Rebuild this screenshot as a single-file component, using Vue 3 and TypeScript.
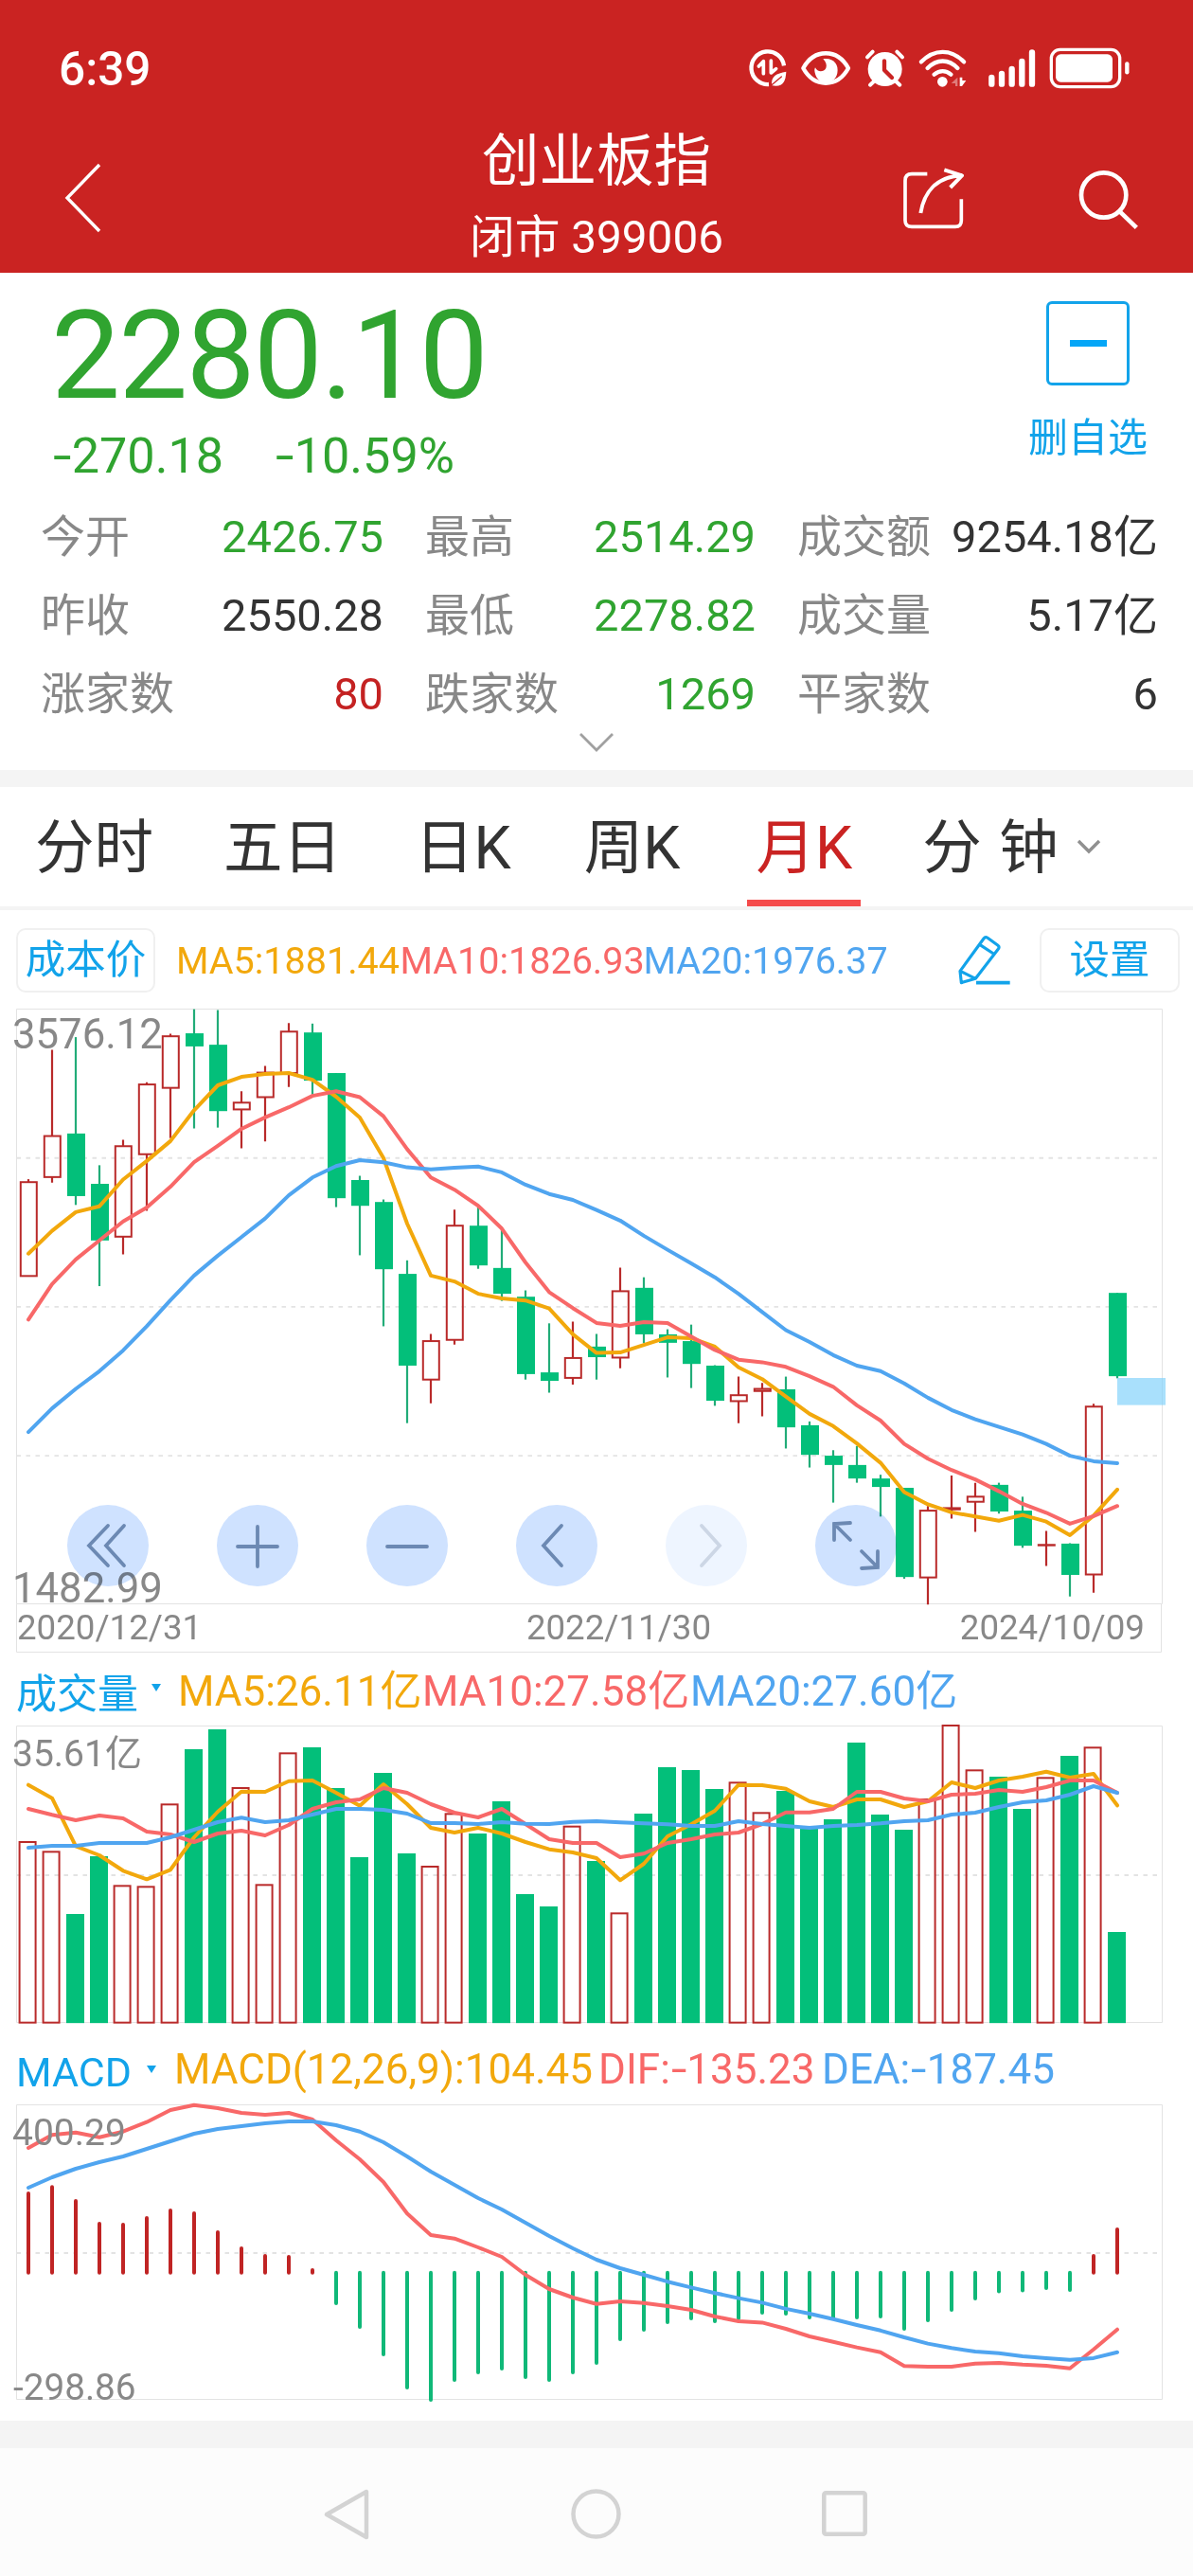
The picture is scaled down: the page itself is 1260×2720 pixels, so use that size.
<script setup lang="ts">
type Tone = 'up' | 'down' | 'flat'
interface Stat { label: string; value: string; tone: Tone }
interface Legend { text: string; color: string; width: number }
type Candle = [high: number, top: number, bottom: number, low: number, up: 0 | 1]

const RED = '#b92a2a'
const GREEN = '#03bf7a'
const ORANGE = '#f2a80c'
const PINK = '#f86868'
const BLUE = '#50a5f0'

const changes = ['-270.18', '-10.59%']
const stats: Stat[] = [
  { label: '今开', value: '2426.75', tone: 'down' },
  { label: '最高', value: '2514.29', tone: 'down' },
  { label: '成交额', value: '9254.18亿', tone: 'flat' },
  { label: '昨收', value: '2550.28', tone: 'flat' },
  { label: '最低', value: '2278.82', tone: 'down' },
  { label: '成交量', value: '5.17亿', tone: 'flat' },
  { label: '涨家数', value: '80', tone: 'up' },
  { label: '跌家数', value: '1269', tone: 'down' },
  { label: '平家数', value: '6', tone: 'flat' },
]

const priceLegend: Legend[] = [
  { text: 'MA5:1881.44', color: ORANGE, width: 236.5 },
  { text: 'MA10:1826.93', color: PINK, width: 257 },
  { text: 'MA20:1976.37', color: BLUE, width: 257 },
]
const volumeLegend: Legend[] = [
  { text: 'MA5:26.11亿', color: ORANGE, width: 258 },
  { text: 'MA10:27.58亿', color: PINK, width: 283 },
  { text: 'MA20:27.60亿', color: BLUE, width: 283 },
]
const macdLegend: Legend[] = [
  { text: 'MACD(12,26,9):104.45', color: ORANGE, width: 448 },
  { text: 'DIF:-135.23', color: PINK, width: 236 },
  { text: 'DEA:-187.45', color: BLUE, width: 250 },
]

// Keeps the minus sign as its own piece so that it can be drawn wider
const pieces = (text: string) => text.split(/(-)/).filter(Boolean)

// Horizontal position of month i
const cx = (i: number) => 30 + i * 25
const line = (values: number[], unit: number) =>
  values.map((v, i) => `${cx(i)},${(v / unit).toFixed(1)}`).join(' ')

// Price panel: 2.24 data units per pixel, measured downwards
const PRICE_UNIT = 2.24
const candles: Candle[] = [
  [437, 444, 666, 666, 1], [131, 335, 432, 445, 1], [101, 329, 477, 498, 0], [404, 448, 582, 690, 0],
  [344, 359, 573, 615, 1], [208, 213, 378, 512, 1], [93, 99, 221, 340, 1], [35, 92, 123, 317, 0],
  [37, 119, 276, 315, 0], [229, 256, 272, 364, 1], [169, 185, 243, 348, 1], [68, 88, 186, 219, 1],
  [69, 90, 204, 237, 0], [186, 186, 482, 503, 0], [429, 439, 500, 617, 0], [485, 491, 650, 785, 0],
  [629, 661, 878, 1014, 0], [803, 820, 911, 967, 1], [509, 547, 817, 828, 1], [503, 547, 641, 649, 0],
  [556, 647, 708, 725, 0], [700, 715, 898, 911, 0], [778, 894, 914, 942, 0], [774, 860, 907, 923, 1],
  [803, 833, 858, 911, 0], [646, 702, 859, 884, 1], [669, 694, 804, 825, 0], [792, 804, 824, 906, 0],
  [781, 820, 874, 931, 0], [877, 878, 961, 973, 0], [904, 948, 962, 1014, 1], [919, 933, 938, 998, 1],
  [904, 934, 1024, 1074, 0], [1010, 1019, 1089, 1119, 0], [1078, 1091, 1113, 1202, 0], [1068, 1113, 1145, 1155, 0],
  [1136, 1145, 1165, 1235, 0], [1167, 1167, 1378, 1382, 0], [1210, 1221, 1379, 1443, 1], [1138, 1215, 1218, 1240, 1],
  [1155, 1188, 1200, 1271, 1], [1155, 1160, 1223, 1228, 0], [1188, 1221, 1304, 1309, 0], [1269, 1302, 1303, 1352, 1],
  [1298, 1299, 1373, 1424, 0], [968, 975, 1372, 1415, 1], [706, 706, 903, 908, 0],
]
const bars = candles.map(([high, top, bottom, low, up], i) => ({
  x: cx(i),
  high: high / PRICE_UNIT,
  top: top / PRICE_UNIT,
  bottom: bottom / PRICE_UNIT,
  low: low / PRICE_UNIT,
  up: up === 1,
}))
const priceLines = [
  { color: ORANGE, points: line([
    613, 559, 515, 501, 438, 394, 347, 274, 215, 195, 188, 186, 202, 242, 291, 387,
    542, 665, 679, 708, 719, 724, 743, 804, 848, 847, 829, 811, 813, 833, 882, 910, 951,
    992, 1021, 1062, 1108, 1177, 1206, 1225, 1235, 1245, 1231, 1247, 1279, 1233, 1171], PRICE_UNIT) },
  { color: PINK, points: line([
    769, 685, 627, 582, 537, 504, 455, 397, 358, 318, 291, 267, 240, 229, 243, 288,
    366, 433, 462, 500, 554, 634, 704, 742, 777, 784, 775, 777, 809, 841, 864, 870, 881,
    903, 928, 972, 1008, 1063, 1098, 1125, 1147, 1175, 1205, 1226, 1252, 1234, 1210], PRICE_UNIT) },
  { color: BLUE, points: line([
    1035, 979, 933, 891, 842, 785, 723, 665, 618, 574, 530, 475, 433, 406, 392, 397,
    409, 414, 410, 407, 421, 450, 472, 486, 510, 535, 571, 604, 636, 669, 708, 751, 794,
    822, 853, 878, 891, 920, 954, 983, 1005, 1023, 1041, 1063, 1091, 1104, 1109], PRICE_UNIT) },
]

// Volume panel: 3 data units per pixel, bars stand on VOLUME_BASE
const VOLUME_UNIT = 3
const VOLUME_BASE = 1187 / VOLUME_UNIT
const volumeTops = [
  615, 646, 843, 660, 754, 757, 496, 321, 258, 444, 751, 334, 315, 444, 663, 396, 651, 693, 526, 588, 486, 780, 819, 566, 675,
  841, 525, 378, 387, 447, 427, 523, 453, 568, 543, 300, 528, 576, 480, 246, 388, 408, 510, 412, 342, 316, 900,
]
const volumeUp = new Set([0, 1, 4, 5, 6, 9, 10, 11, 17, 18, 23, 25, 30, 31, 38, 39, 40, 43, 45])
const volumes = volumeTops.map((top, i) => ({ x: cx(i), top: top / VOLUME_UNIT, up: volumeUp.has(i) }))
const volumeLines = [
  { color: ORANGE, points: line([
    434, 476, 628, 657, 706, 733, 703, 600, 519, 455, 456, 422, 420, 459, 500, 432, 495, 570, 585, 570, 588, 615, 638, 648, 666,
    736, 684, 597, 559, 516, 434, 435, 446, 486, 504, 480, 480, 504, 486, 426, 444, 420, 408, 392, 411, 399, 499], VOLUME_UNIT) },
  { color: PINK, points: line([
    510, 529, 546, 531, 540, 582, 591, 615, 588, 579, 594, 561, 510, 489, 480, 444, 459, 495, 522, 537, 510, 558, 606, 618, 618,
    663, 652, 618, 606, 591, 585, 558, 521, 521, 510, 456, 456, 477, 486, 465, 462, 450, 456, 441, 420, 420, 459], VOLUME_UNIT) },
  { color: BLUE, points: line([
    633, 627, 627, 618, 618, 618, 600, 576, 552, 538, 552, 546, 528, 510, 510, 513, 525, 555, 555, 558, 552, 557, 558, 551, 549,
    553, 556, 559, 564, 564, 549, 558, 564, 570, 564, 561, 556, 549, 546, 528, 522, 504, 489, 483, 465, 438, 459], VOLUME_UNIT) },
]

// MACD panel, in pixels
const MACD_ZERO = 249.8
const histogram = [
  164, 157.3, 172, 196, 197, 190, 182, 185, 205, 222, 230, 231, 245, 284, 309, 338, 373, 386, 365, 357, 353, 362, 365, 357, 347,
  322, 312, 304, 300, 303, 300, 294, 295, 299, 299, 299, 298, 311, 302, 291, 279, 271.5, 270.5, 268, 270, 230, 202,
].map((end, i) => ({ x: cx(i), up: end < MACD_ZERO, end: end < MACD_ZERO ? end + 2 : end - 2 }))
const macdLines = [
  { color: PINK, points: line([
    118, 104.3, 101.7, 106.7, 100.7, 90.7, 78, 72.7, 76, 81, 83, 81, 88, 110, 130, 154, 187.3, 210, 213.7, 223, 233, 252, 267, 276, 282.7,
    280, 281.7, 285, 289, 296, 301, 302.4, 309, 317, 322.8, 328.6, 333.7, 348.2, 349, 349, 345.7, 345, 346.8, 347.9, 350.8, 330.8, 309.7], 1) },
  { color: BLUE, points: line([
    160, 149, 140, 133, 127, 119, 111, 103, 98, 95, 92, 90, 90, 94, 100.7, 112, 127, 143, 157, 171, 183, 197, 211, 224, 236,
    245, 252, 259.2, 265.4, 271.2, 276.6, 281.4, 287.9, 293, 298.8, 305, 310.8, 318, 324.6, 329.3, 333, 334.8, 338, 339.9, 341.7, 339.9, 333.7], 1) },
]

const controls = [
  { x: 114, d: 'M0 -21 L-20 0 L0 21 M17 -21 L-2 0 L17 21', faded: false },
  { x: 272, d: 'M-21 1 H21 M0 -20 V22', faded: false },
  { x: 430, d: 'M-21 1 H21', faded: false },
  { x: 588, d: 'M5 -21 L-14 0 L5 21', faded: false },
  { x: 746, d: 'M-5 -21 L14 0 L-5 21', faded: true },
  { x: 904, d: 'M-6 -24 L-23 -23 V-6 M-23 -23 L-6 -6 M23 6 V23 L6 24 M23 23 L6 6', faded: false },
]
</script>

<template>
  <div class="screen">
    <header class="top">
      <div class="status">
        <span class="clock">6:39</span>
        <svg class="status-icons" width="420" height="60" viewBox="0 0 1260 180" fill="none" stroke="#fff" stroke-linecap="round" stroke-linejoin="round">
          <path d="M144 88 A52 52 0 1 0 96 147" stroke-width="13" stroke-linecap="butt" />
          <path d="M64 90 L79 74 V113 M103 72 V111 L119 98" stroke-width="11" />
          <path d="M151 107 C120 112 101 122 106 151 C140 157 149 140 151 107 Z" fill="#fff" stroke="none" />
          <path d="M104 150 L136 123" stroke="#ca2322" stroke-width="4" />
          <path d="M205 96 C240 33 313 33 348 96 C313 159 240 159 205 96 Z" stroke-width="13" />
          <path d="M268 67 C300 62 319 84 313 112 C306 150 251 154 242 110 C240 102 241 98 243 94 C250 110 270 109 277 96 C281 86 277 76 268 67 Z" fill="#fff" stroke="none" />
          <circle cx="464" cy="99" r="54" fill="#fff" stroke="none" />
          <path d="M462 73 V102 L486 126" stroke="#ca2322" stroke-width="13" />
          <path d="M408 61 L425 44 M502 44 L519 61 M417 149 L432 135 M511 149 L496 135" stroke-width="12" />
          <path d="M579 76 C620 34 674 34 714 76 M599 96 C628 66 666 66 694 96 M620 116 C637 102 657 102 673 116" stroke-width="13" />
          <circle cx="646" cy="139" r="16" fill="#fff" stroke="none" />
          <path d="M694 125 V153 H687 V144 H674 Z" fill="#fff" opacity=".4" stroke="none" />
          <path d="M701 125 H709 V135 H721 L708 153 H701 Z" fill="#fff" stroke="none" />
          <path d="M802 126 V146 M834 114 V146 M866 99 V146 M898 75 V146 M930 46 V146" stroke-width="19" />
          <rect x="991" y="37" width="217" height="118" rx="28" stroke-width="10" />
          <rect x="1005" y="52" width="180" height="88" rx="16" fill="#fff" stroke="none" />
          <path d="M1231 82 V109" stroke-width="13" />
        </svg>
      </div>
      <div class="bar">
        <div class="bar-left">
          <svg width="45" height="76" viewBox="0 0 45 76" fill="none" stroke="#fff" stroke-width="3.4"><path d="M40 3 L6 38 L40 73" /></svg>
        </div>
        <div class="titles">
          <h1>创业板指</h1>
          <p>闭市 399006</p>
        </div>
        <div class="bar-right">
          <svg width="260" height="74" viewBox="510 400 780 222" fill="none" stroke="#fff" stroke-width="11" stroke-linejoin="round">
            <path d="M598 432 H549 Q528 432 528 453 V579 Q528 599 549 599 H687 Q706 599 706 579 V512" />
            <path d="M577 556 C587 495 622 441 708 437 M652 419 L708 437 L671 475" stroke-width="12" />
            <circle cx="1157" cy="499" r="71" stroke-width="14" />
            <path d="M1208 551 L1261 602" stroke-width="14" />
          </svg>
        </div>
      </div>
    </header>

    <section class="quote">
      <div class="quote-head">
        <div>
          <div class="price">2280.10</div>
          <div class="change">
            <span v-for="c in changes" :key="c"><template v-for="(p, i) in pieces(c)" :key="i"><b v-if="p === '-'">-</b><template v-else>{{ p }}</template></template></span>
          </div>
        </div>
        <div class="watch">
          <div class="watch-box"><i></i></div>
          <span>删自选</span>
        </div>
      </div>
      <div class="stats">
        <div v-for="s in stats" :key="s.label" class="stat">
          <span class="label">{{ s.label }}</span>
          <span :class="s.tone">{{ s.value }}</span>
        </div>
      </div>
      <svg class="expand" width="40" height="24" viewBox="0 0 40 24" fill="none" stroke="#a0a0a0" stroke-width="2.8"><path d="M3 3 L20 20 L37 3" /></svg>
    </section>

    <nav class="tabs">
      <span class="tab">分时</span>
      <span class="tab">五日</span>
      <span class="tab">日K</span>
      <span class="tab">周K</span>
      <span class="tab active">月K</span>
      <span class="tab">分 钟</span>
      <svg width="28" height="18" viewBox="0 0 28 18" fill="none" stroke="#909090" stroke-width="3.4"><path d="M3 3 L14 14 L25 3" /></svg>
    </nav>

    <div class="legend main">
      <span class="chip cost">成本价</span>
      <div class="values">
        <span v-for="l in priceLegend" :key="l.text" :style="{ color: l.color, width: l.width + 'px' }">{{ l.text }}</span>
      </div>
      <svg class="pencil" width="56" height="56" viewBox="0 0 168 168" fill="none" stroke="#12a3ea" stroke-width="9.5" stroke-linejoin="round">
        <path d="M9 118 L84 15 Q89 8 96 13 L128 36 Q135 41 130 48 L58 142 L13 155 Z M9 118 L58 142 M71 34 L115 63" />
        <path d="M60 155 H167" stroke-width="11" />
      </svg>
      <span class="chip settings">设置</span>
    </div>

    <svg class="chart" width="1260" height="695" viewBox="0 0 1260 695">
      <g fill="none" stroke="#e3e3e3">
        <path d="M17.5 15.5 H1227.5 V643.5 H17.5 Z M17.5 643.5 V694.5 H1226.5 V643.5" />
        <path d="M17.5 172.8 H1227.5 M17.5 329.9 H1227.5 M17.5 487.1 H1227.5" stroke-width="1.9" stroke-dasharray="4.5 5.5" />
      </g>
      <g class="axis">
        <text x="13" y="57.3" font-size="43.7">3576.12</text>
        <text x="13" y="642.3" font-size="43.7">1482.99</text>
        <text x="18" y="680.8" font-size="36.7">2020/12/31</text>
        <text x="653.5" y="680.8" font-size="36.7" text-anchor="middle">2022/11/30</text>
        <text x="1209" y="680.8" font-size="36.7" text-anchor="end">2024/10/09</text>
      </g>
      <g v-for="b in bars" :key="b.x">
        <template v-if="b.up">
          <path :d="`M${b.x} ${b.high} V${b.top} M${b.x} ${b.bottom} V${b.low}`" :stroke="RED" stroke-width="2.2" />
          <rect :x="b.x - 8.2" :y="b.top" width="17" :height="b.bottom - b.top" fill="none" :stroke="RED" stroke-width="2" />
        </template>
        <template v-else>
          <path :d="`M${b.x} ${b.high} V${b.low}`" stroke="#22ac78" stroke-width="2.2" />
          <rect :x="b.x - 9" :y="b.top" width="19" :height="b.bottom - b.top" :fill="GREEN" />
        </template>
      </g>
      <polyline v-for="l in priceLines" :key="l.color" :points="l.points" fill="none" :stroke="l.color" stroke-width="4" stroke-linecap="round" stroke-linejoin="round" />
      <rect x="1180" y="405" width="51" height="28.6" fill="#7dd0fb" opacity=".66" />
      <g v-for="c in controls" :key="c.x" :transform="`translate(${c.x} 582)`" :opacity="c.faded ? 0.35 : 1" class="control">
        <circle r="43" fill="#cfe2ff" />
        <path :d="c.d" fill="none" stroke="#6c89b3" stroke-width="3.8" stroke-linecap="round" />
      </g>
    </svg>

    <div class="legend sub volume">
      <span class="name">成交量</span><i class="caret"></i>
      <div class="values">
        <span v-for="l in volumeLegend" :key="l.text" :style="{ color: l.color, width: l.width + 'px' }">{{ l.text }}</span>
      </div>
    </div>
    <svg class="chart" width="1260" height="330" viewBox="0 80 1260 330">
      <g fill="none" stroke="#e3e3e3">
        <path d="M17.5 82.5 H1227.5 V395.5 H17.5 Z" />
        <path d="M17.5 240 H1227.5" stroke-width="1.9" stroke-dasharray="4.5 5.5" />
      </g>
      <g v-for="v in volumes" :key="v.x">
        <rect v-if="v.up" :x="v.x - 9.4" :y="v.top" width="17" :height="VOLUME_BASE - v.top" fill="none" :stroke="RED" stroke-width="2" />
        <rect v-else :x="v.x - 10" :y="v.top" width="19" :height="VOLUME_BASE - v.top + 0.5" :fill="GREEN" />
      </g>
      <polyline v-for="l in volumeLines" :key="l.color" :points="l.points" fill="none" :stroke="l.color" stroke-width="4" stroke-linecap="round" stroke-linejoin="round" />
      <text class="axis" x="13" y="125.3" font-size="39">35.61亿</text>
    </svg>

    <div class="legend sub macd">
      <span class="name">MACD</span><i class="caret"></i>
      <div class="values">
        <span v-for="l in macdLegend" :key="l.text" :style="{ color: l.color, width: l.width + 'px' }"><template v-for="(p, i) in pieces(l.text)" :key="i"><b v-if="p === '-'">-</b><template v-else>{{ p }}</template></template></span>
      </div>
    </div>
    <svg class="chart" width="1260" height="341" viewBox="0 65 1260 341">
      <g fill="none" stroke="#e3e3e3">
        <path d="M17.5 72.5 H1227.5 V383.5 H17.5 Z" />
        <path d="M17.5 229 H1227.5" stroke-width="1.9" stroke-dasharray="4.5 5.5" />
      </g>
      <path v-for="h in histogram" :key="h.x" :d="`M${h.x} ${MACD_ZERO} V${h.end}`" :stroke="h.up ? '#c02424' : '#10b878'" stroke-width="4" stroke-linecap="round" />
      <polyline v-for="l in macdLines" :key="l.color" :points="l.points" fill="none" :stroke="l.color" stroke-width="4" stroke-linecap="round" stroke-linejoin="round" />
      <g class="axis">
        <text x="13" y="115" font-size="39">400.29</text>
        <text x="14" y="384" font-size="38.7">-298.86</text>
      </g>
    </svg>

    <div class="gap"></div>
    <footer class="sysnav">
      <svg width="60" height="60" viewBox="0 0 60 60" fill="none" stroke="#d3d3d3" stroke-width="4.5" stroke-linejoin="round"><path d="M7 30 L49 6 V54 Z" /></svg>
      <svg width="60" height="60" viewBox="0 0 60 60" fill="none" stroke="#d3d3d3" stroke-width="4.5"><circle cx="29.5" cy="29.5" r="24" /></svg>
      <svg width="60" height="60" viewBox="0 0 60 60" fill="none" stroke="#d3d3d3" stroke-width="4.5"><rect x="8.3" y="7.3" width="43.4" height="43.4" rx="2" /></svg>
    </footer>
  </div>
</template>

<style>
body {
  margin: 0;
  background: #fff;
}
</style>

<style scoped>
.screen {
  width: 1260px;
  height: 2720px;
  overflow: hidden;
  background: #fff;
  color: #333;
  font-family: Roboto, "Noto Sans CJK SC", sans-serif;
  display: flex;
  flex-direction: column;
}
.screen > * {
  flex-shrink: 0;
}
svg {
  display: block;
}
b {
  display: inline-block;
  margin: 0 0.1em 0 0.02em;
  font-weight: 400;
  transform: scaleX(1.35);
  transform-origin: left;
}
.top {
  height: 288px;
  background: #ca2322;
  color: #fff;
}
.status {
  height: 60px;
  padding: 40px 60px 0 62px;
  display: flex;
  justify-content: space-between;
}
.clock {
  font-size: 49.5px;
  font-weight: 500;
  line-height: 67px;
}
.bar {
  display: grid;
  grid-template-columns: 310px 1fr 310px;
}
.bar-left {
  padding: 71px 0 0 65px;
}
.bar-right {
  padding-top: 73px;
}
.titles {
  padding-top: 30px;
  text-align: center;
}
h1 {
  margin: 0;
  font-size: 60.5px;
  font-weight: 400;
  line-height: 82px;
}
.titles p {
  margin: 0;
  padding-top: 9px;
  font-size: 47.7px;
  line-height: 60px;
}
.quote {
  height: 525px;
}
.quote-head {
  height: 237px;
  display: flex;
  justify-content: space-between;
  color: #30a430;
}
.price {
  padding: 23px 0 0 54px;
  font-size: 130px;
  line-height: 130px;
  letter-spacing: -1.8px;
}
.change {
  padding-left: 55px;
  display: flex;
  font-size: 52.2px;
  line-height: 82px;
}
.change span:first-child {
  width: 235px;
}
.watch {
  width: 160px;
  margin-right: 31px;
  padding-top: 30px;
  display: flex;
  flex-direction: column;
  align-items: center;
  color: #12a3ea;
  font-size: 42px;
  line-height: 62px;
}
.watch-box {
  width: 82px;
  height: 83px;
  margin-bottom: 25px;
  border: 3.5px solid #12a3ea;
  border-radius: 6px;
  display: grid;
  place-items: center;
}
.watch-box i {
  width: 39px;
  height: 7px;
  background: #05a6f7;
}
.stats {
  display: grid;
  grid-template-columns: 362px 349px 381px;
  column-gap: 44px;
  padding-left: 43px;
}
.stat {
  height: 83px;
  display: flex;
  justify-content: space-between;
  align-items: center;
  font-size: 47px;
  line-height: 83px;
  white-space: nowrap;
}
.label {
  color: #888;
}
.up {
  color: #c42222;
}
.down {
  color: #30a430;
}
.expand {
  margin: -2px auto 0;
}
.tabs {
  height: 126px;
  border-top: 18px solid #f4f4f4;
  border-bottom: 4px solid #f4f4f4;
  padding-left: 37px;
  display: flex;
  align-items: center;
  font-size: 62.5px;
}
.tab {
  height: 126px;
  line-height: 130px;
  margin-right: 74px;
  white-space: nowrap;
  box-sizing: border-box;
}
.tab:nth-child(2),
.tab:nth-child(3) {
  margin-right: 77px;
}
.tab.active {
  color: #ca2322;
  border-bottom: 7px solid #f54b4b;
  padding: 0 9px;
  margin: 0 65px 0 -3px;
}
.tab:nth-child(6) {
  word-spacing: 3px;
  margin-right: 18px;
}
.legend {
  display: flex;
  align-items: center;
  box-sizing: border-box;
  white-space: nowrap;
}
.legend.main {
  height: 89px;
  padding: 17px 14px 0 17px;
  font-size: 39.5px;
}
.values {
  display: flex;
}
.chip {
  height: 68px;
  box-sizing: border-box;
  border: 2px solid #f0f0f0;
  border-radius: 10px;
  color: #12a3ea;
  font-size: 42.5px;
  line-height: 64px;
  text-align: center;
}
.cost {
  width: 147px;
  margin-right: 22px;
}
.settings {
  width: 148px;
}
.pencil {
  margin: 0 31px 0 auto;
}
.sub {
  font-size: 44px;
  padding-left: 17px;
}
.name {
  color: #12a3ea;
  font-size: 43px;
}
.caret {
  border: 5px solid transparent;
  border-top: 8px solid #12a3ea;
  border-bottom: 0;
}
.volume {
  height: 75px;
  padding-bottom: 2px;
}
.volume .name {
  width: 143px;
  padding-top: 6px;
}
.volume .values {
  margin-left: 18px;
}
.macd {
  height: 65px;
  padding-top: 5px;
}
.macd .name {
  width: 138px;
  padding-top: 6px;
}
.macd .values {
  margin-left: 19px;
}
.axis {
  fill: #888;
}
.control {
  mix-blend-mode: multiply;
}
.gap {
  height: 29px;
  background: #f4f4f4;
}
.sysnav {
  height: 135px;
  background: #fcfcfc;
  display: flex;
  justify-content: center;
  gap: 202px;
  padding: 40px 0 0;
  box-sizing: border-box;
}
</style>
